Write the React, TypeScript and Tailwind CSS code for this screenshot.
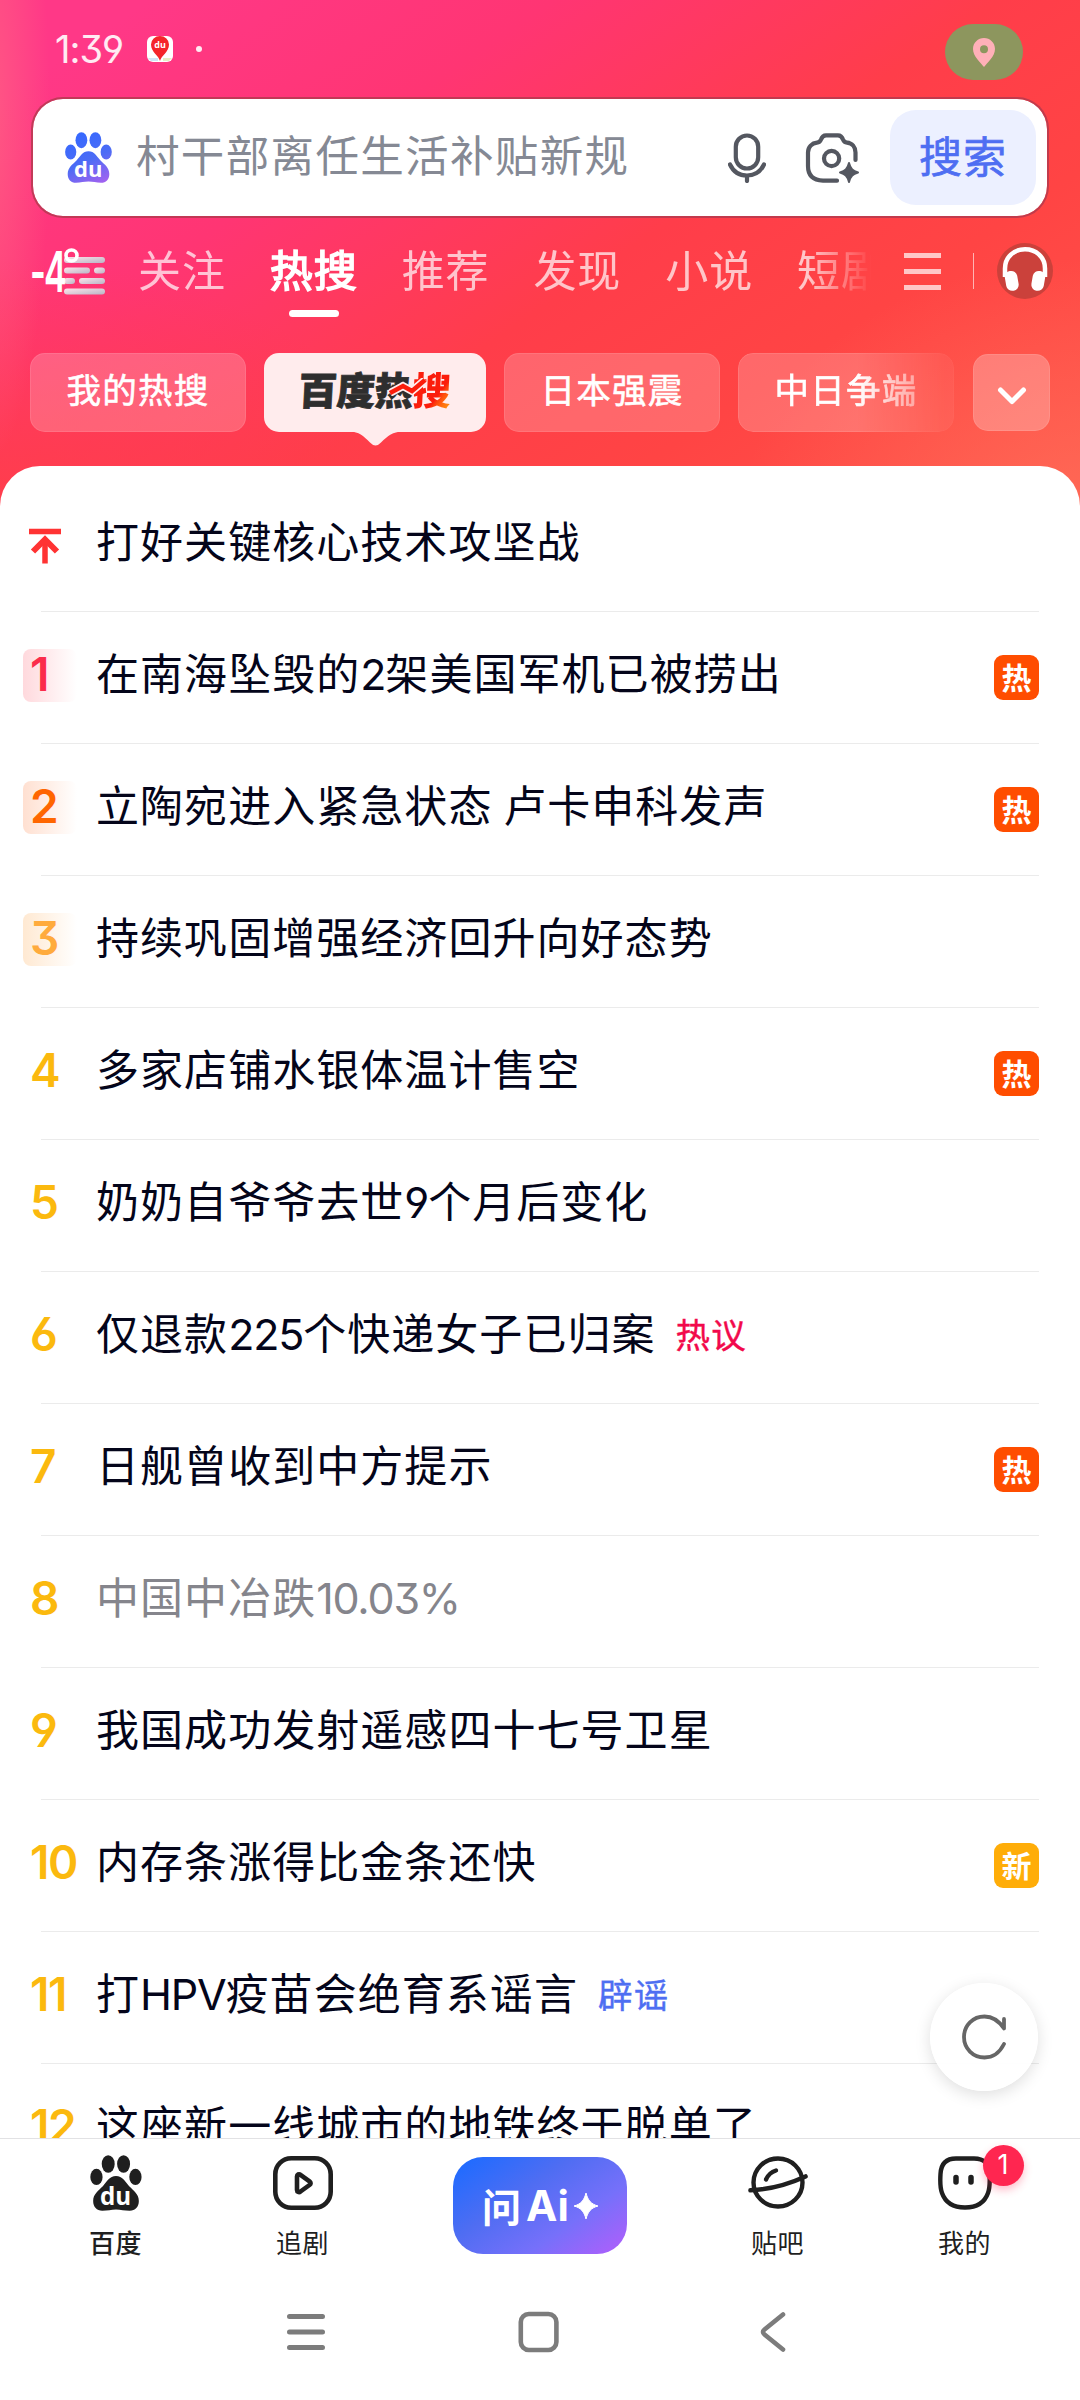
import { ReactNode } from 'react';
import clsx from 'clsx';

interface HotItem {
  rank: string;
  title: string;
  badge?: '热' | '新';
  note?: { text: string; className: string };
  muted?: boolean;
}

const hotList: HotItem[] = [
  { rank: 'top', title: '打好关键核心技术攻坚战' },
  { rank: '1', title: '在南海坠毁的2架美国军机已被捞出', badge: '热' },
  { rank: '2', title: '立陶宛进入紧急状态 卢卡申科发声', badge: '热' },
  { rank: '3', title: '持续巩固增强经济回升向好态势' },
  { rank: '4', title: '多家店铺水银体温计售空', badge: '热' },
  { rank: '5', title: '奶奶自爷爷去世9个月后变化' },
  { rank: '6', title: '仅退款225个快递女子已归案', note: { text: '热议', className: 'text-[#f2094b]' } },
  { rank: '7', title: '日舰曾收到中方提示', badge: '热' },
  { rank: '8', title: '中国中冶跌10.03%', muted: true },
  { rank: '9', title: '我国成功发射遥感四十七号卫星' },
  { rank: '10', title: '内存条涨得比金条还快', badge: '新' },
  { rank: '11', title: '打HPV疫苗会绝育系谣言', note: { text: '辟谣', className: 'text-[#4e6ef2]' } },
  { rank: '12', title: '这座新一线城市的地铁终于脱单了' },
];

const rankColor: Record<string, string> = {
  '1': 'text-[#fb2c4b]',
  '2': 'text-[#ff6600]',
  '3': 'text-[#ffab3d]',
};

const rankPlate: Record<string, string> = {
  '1': 'from-[#ffd9dd]',
  '2': 'from-[#ffe0d1]',
  '3': 'from-[#ffe9d2]',
};

const tabs = ['关注', '热搜', '推荐', '发现', '小说', '短剧'];

function Paw({ className, fill, duClass }: { className: string; fill: string; duClass: string }) {
  return (
    <svg viewBox="0 0 47 51" className={className}>
      <defs>
        <linearGradient id="pawGradient" gradientUnits="userSpaceOnUse" x1="12" y1="0" x2="36" y2="51">
          <stop offset="0" stopColor="#3468ff" />
          <stop offset="0.55" stopColor="#4d6cf5" />
          <stop offset="1" stopColor="#a062f0" />
        </linearGradient>
      </defs>
      <g fill={fill}>
        <ellipse cx="16.4" cy="8.2" rx="5.9" ry="8" />
        <ellipse cx="30.4" cy="8.2" rx="5.9" ry="8" />
        <ellipse cx="5.7" cy="20" rx="5.6" ry="7.4" />
        <ellipse cx="41.2" cy="20" rx="5.6" ry="7.4" />
        <path d="M23.5 19.2C29.5 19.2 31.5 24 35.5 28.5C39.5 32.5 44.3 35.5 44.3 42C44.3 47.5 41 50.8 36 50.8C31 50.8 28 49.6 23.5 49.6C19 49.6 16 50.8 11 50.8C6 50.8 2.7 47.5 2.7 42C2.7 35.5 7.5 32.5 11.5 28.5C15.5 24 17.5 19.2 23.5 19.2Z" />
      </g>
      <text x="23.2" y="45.4" textAnchor="middle" className={duClass}>du</text>
    </svg>
  );
}

function StatusBar() {
  return (
    <div className="flex h-[97px] items-center pl-[55px] pr-[57px]">
      <span className="font-[Inter] text-[38px] leading-none tracking-[-1px] text-white/90 [font-feature-settings:'cv09','cv04']">1:39</span>
      <svg viewBox="0 0 26 26" className="ml-[24px] h-[26px] w-[26px]">
        <rect width="26" height="26" rx="6" fill="#fff" />
        <path d="M1 22h10v3H4z" fill="#cfe6f7" />
        <path d="M16 22h9l-3 3h-6z" fill="#e5efc4" />
        <path d="M13 25C12 20 4 16 4 8.500A9 8.500 0 0 1 22 8.500C22 16 14 20 13 25Z" fill="#f5262b" />
        <text x="13" y="12" textAnchor="middle" fill="#fff" className="font-['Open_Sans'] text-[9px] font-bold">du</text>
      </svg>
      <span className="ml-[23px] h-[6px] w-[6px] rounded-full bg-white/90" />
      <span className="ml-auto mt-[7px] flex h-[56px] w-[78px] items-center justify-center rounded-[28px] bg-[#8d965e]">
        <svg viewBox="0 0 22 29" className="h-[29px] w-[22px]">
          <path fillRule="evenodd" d="M11 0C5 0 0 4.700 0 11C0 18.500 8 25 11 29C14 25 22 18.500 22 11C22 4.700 17 0 11 0ZM11 7.200a4 4 0 1 1 0 8a4 4 0 1 1 0-8Z" fill="#ffb0b8" />
        </svg>
      </span>
    </div>
  );
}

function SearchBar() {
  return (
    <div className="mx-[31px] flex h-[121px] items-center rounded-[32px] border-2 border-[#b23a4e]/80 bg-white bg-clip-padding pl-[32px] pr-[11px]">
      <Paw className="h-[51px] w-[47px]" fill="url(#pawGradient)" duClass="fill-white font-['Open_Sans'] text-[22px] font-bold" />
      <span className="ml-[24px] pb-[8px] text-[43.500px] leading-none tracking-[1.350px] text-[#858994]">村干部离任生活补贴新规</span>
      <svg viewBox="0 0 38 50" className="ml-auto h-[50px] w-[38px]" fill="none" stroke="#545760" strokeWidth="4.200" strokeLinecap="round">
        <rect x="7.800" y="2.500" width="22.400" height="33" rx="11.200" />
        <path d="M2 31.500C5 38 11 42.500 19 42.500S33 38 36 31.500" />
        <path d="M19 43v5" />
      </svg>
      <svg viewBox="0 0 54 50" className="ml-[39px] h-[50px] w-[54px]" fill="none" stroke="#545760" strokeWidth="4.200" strokeLinecap="round" strokeLinejoin="round">
        <path d="M50.500 27V19.500C50.500 14 47 10 42 9.600C39.600 9.400 38.800 8.600 38 6.500C37 3.500 36 2.300 33 2.300H21C18 2.300 17 3.500 16 6.500C15.200 8.600 14.400 9.400 12 9.600C7 10 3 14 3 19.500V33C3 42 8 47.300 18 47.600L32 47.700" />
        <circle cx="26.600" cy="25.500" r="7.600" />
        <path d="M44 30C45.500 36 48 38 53 39.500C48 41 45.500 43 44 49C42.500 43 40 41 35 39.500C40 38 42.500 36 44 30Z" fill="#545760" strokeWidth="2" />
      </svg>
      <button className="ml-[31px] flex h-[95px] w-[146px] items-center justify-center rounded-[26px] bg-[#ecf0ff] pb-[7px] text-[43px] leading-none tracking-[1px] text-[#4e6ef2] [-webkit-text-stroke:0.7px_#4e6ef2]">
        搜索
      </button>
    </div>
  );
}

function ChannelTabs() {
  return (
    <div className="flex h-[106px] items-center pl-[30px] pr-[27px] text-white">
      <svg viewBox="0 0 76 48" className="h-[48px] w-[76px] shrink-0 overflow-visible">
        <defs>
          <linearGradient id="fogGradient" x1="0" y1="0" x2="1" y2="1">
            <stop offset="0" stopColor="#ffe3ea" />
            <stop offset="1" stopColor="#b9b6c6" />
          </linearGradient>
        </defs>
        <g fill="url(#fogGradient)">
          <rect x="34" y="10" width="41" height="6" rx="3" />
          <rect x="34" y="20.500" width="26" height="6" rx="3" />
          <rect x="64" y="20.500" width="11" height="6" rx="3" />
          <rect x="34" y="31" width="11" height="6" rx="3" />
          <rect x="49" y="31" width="26" height="6" rx="3" />
          <rect x="34" y="41.500" width="41" height="6" rx="3" />
        </g>
        <text x="0" y="45" textLength="35" lengthAdjust="spacingAndGlyphs" fill="#fff" className="font-[Inter] text-[57px] font-semibold tracking-[-3px]">-4</text>
        <circle cx="41.500" cy="8.500" r="5.500" fill="none" stroke="#fff" strokeWidth="3.600" />
      </svg>
      <div className="ml-[32px] flex w-[736px] gap-[44px] overflow-hidden whitespace-nowrap [mask-image:linear-gradient(to_right,black_670px,transparent_734px)]">
        {tabs.map((tab) => {
          const active = tab === '热搜';
          return (
            <span
              key={tab}
              className={clsx(
                'flex h-[94px] shrink-0 flex-col items-center pt-[19px] text-[43px] leading-[50px] tracking-[0.900px]',
                active ? '[-webkit-text-stroke:1.6px_white]' : 'text-white/70',
              )}
            >
              {tab}
              {active && <i className="mt-[17px] h-[7px] w-[50px] rounded-full bg-white" />}
            </span>
          );
        })}
      </div>
      <div className="ml-[30px] flex h-[37px] w-[37px] flex-col justify-between">
        <i className="h-[5px] bg-white/70" />
        <i className="h-[5px] bg-white/70" />
        <i className="h-[5px] bg-white/70" />
      </div>
      <i className="ml-[32px] h-[36px] w-px bg-white/60" />
      <svg viewBox="0 0 56 56" className="ml-auto h-[56px] w-[56px]">
        <circle cx="28" cy="28" r="28" fill="#cb413b" />
        <path d="M8 34V25.500C8 14 17 6.200 28 6.200S48 14 48 25.500V34" fill="none" stroke="#fff" strokeWidth="4.500" />
        <rect x="8.500" y="28" width="12.500" height="20" rx="6" transform="rotate(-10 14 38)" fill="#fff" />
        <rect x="35" y="28" width="12.500" height="20" rx="6" transform="rotate(10 42 38)" fill="#fff" />
      </svg>
    </div>
  );
}

function Chip({ children, className }: { children: ReactNode; className?: string }) {
  return (
    <span className={clsx('flex h-[79px] w-[216px] shrink-0 items-center justify-center rounded-[15px] border border-white/10 bg-white/20 pb-[9px] text-[34.500px] leading-none tracking-[1.200px] text-white [-webkit-text-stroke:0.6px_white]', className)}>
      {children}
    </span>
  );
}

function TopicChips() {
  return (
    <div className="flex h-[143px] items-start gap-[18px] pt-[29px] pl-[30px]">
      <Chip>我的热搜</Chip>
      <div className="relative flex h-[79px] w-[222px] shrink-0 items-center justify-center rounded-[15px] bg-[#ffeced] pb-[10px]">
        <span className="-skew-x-3 text-[38.500px] leading-[48px] font-black tracking-[-0.600px] text-[#2e2e2e]">
          <span className="[-webkit-text-stroke:0.8px_#2e2e2e]">百度热</span>
          <span className="bg-linear-to-br from-[#fb1d0c] from-65% to-[#ffae10] bg-clip-text text-transparent">搜</span>
        </span>
        <svg viewBox="0 0 38 18" className="absolute top-[25px] left-[125px] h-[18px] w-[38px]" fill="none">
          <path d="M1 15L14 8L23 13L36 2" stroke="#ffeced" strokeWidth="8" />
          <path d="M1 15L14 8L23 13L36 2" stroke="#fb1d0c" strokeWidth="4.500" />
        </svg>
        <svg viewBox="0 0 52 15" className="absolute top-[78px] left-[86px] h-[15px] w-[52px]">
          <path d="M0 0.500C9 1 13 4.500 20 11.500Q25.500 17.500 31 11.500C38 4.500 43 1 52 0.500Z" fill="#ffeced" />
        </svg>
      </div>
      <Chip>日本强震</Chip>
      <Chip className="[mask-image:linear-gradient(to_right,black_55%,rgba(0,0,0,0.25)_96%)]">中日争端</Chip>
      <span className="mt-px ml-px flex h-[77px] w-[77px] items-center justify-center rounded-[15px] border border-white/10 bg-white/25">
        <svg viewBox="0 0 30 18" className="mt-[6px] h-[18px] w-[30px]" fill="none" stroke="#fff" strokeWidth="5" strokeLinecap="round" strokeLinejoin="round">
          <path d="M3.500 3L15 14.500L26.500 3" />
        </svg>
      </span>
    </div>
  );
}

// Latin letters and digits get their own face and tighter tracking inside Chinese titles
function Title({ text }: { text: string }) {
  return (
    <>
      {text.split(/([A-Z0-9.%]+)/).map((part, idx) =>
        idx % 2 ? (
          <span key={idx} className="font-[Inter] text-[43px] leading-none font-normal tracking-[-1.200px] [font-feature-settings:'cv03','cv04','cv09']">{part}</span>
        ) : (
          part
        ),
      )}
    </>
  );
}

function HotRow({ item, first }: { item: HotItem; first: boolean }) {
  return (
    <div className={clsx('relative flex shrink-0 items-center pr-[41px]', first ? 'h-[146px] pt-[14px]' : 'h-[132px]')}>
      <div className="flex w-[96px] shrink-0 pl-[23px]">
        {item.rank === 'top' ? (
          <svg viewBox="0 0 32 36" className="ml-[6px] h-[36px] w-[32px]" fill="none" stroke="#ff3333" strokeWidth="5.500">
            <path d="M0 3.500H32M16 35.500V11" />
            <path d="M4 23.500L16 11.500L28 23.500" strokeWidth="6" />
          </svg>
        ) : (
          <span
            className={clsx(
              'mt-[-5px] flex h-[53px] w-[54px] items-center rounded-[8px] pb-[3px] pl-[7px] font-[Inter] text-[46px] leading-none font-semibold tracking-[-1.500px] [font-feature-settings:\'cv03\',\'cv04\',\'cv09\']',
              rankColor[item.rank] ?? 'text-[#fbb90e]',
              rankPlate[item.rank] && 'bg-linear-to-r to-white',
              rankPlate[item.rank],
            )}
          >
            {item.rank}
          </span>
        )}
      </div>
      <span className={clsx('mt-[-15px] text-[43px] leading-[60px] tracking-[1.050px] whitespace-nowrap', item.muted ? 'text-[#85858c]' : 'text-[#04051a]')}>
        <Title text={item.title} />
      </span>
      {item.note && <span className={clsx('mt-[-10px] ml-[20px] text-[34.500px] leading-none tracking-[1.200px] [-webkit-text-stroke:0.4px_currentColor]', item.note.className)}>{item.note.text}</span>}
      {item.badge && (
        <span className={clsx('mt-[-2px] ml-auto flex h-[45px] w-[45px] items-center justify-center rounded-[9px] pb-[3px] text-[30px] leading-none font-bold text-white', item.badge === '热' ? 'bg-[#ff4d00]' : 'bg-[#ffad08]')}>
          {item.badge}
        </span>
      )}
      <i className="absolute right-[41px] bottom-0 left-[41px] h-px bg-[#ebebeb]" />
    </div>
  );
}

function NavItem({ label, bold, children }: { label: string; bold?: boolean; children: ReactNode }) {
  return (
    <div className="flex w-[187px] flex-col items-center">
      <div className="relative flex h-[56px] items-center">{children}</div>
      <span className={clsx('mt-[16px] text-[26px] leading-[30px] tracking-[0.500px] text-[#1f1f1f]', bold && 'font-medium')}>{label}</span>
    </div>
  );
}

function BottomNav() {
  return (
    <nav className="flex h-[142px] shrink-0 border-t border-[#e2e2e4] bg-white px-[22px] pt-[16px]">
      <NavItem label="百度" bold>
        <Paw className="h-[56px] w-[52px]" fill="#1f1f1f" duClass="fill-white font-['Open_Sans'] text-[22px] font-bold" />
      </NavItem>
      <NavItem label="追剧">
        <svg viewBox="0 0 60 54" className="h-[54px] w-[60px]" fill="none" stroke="#1f1f1f" strokeWidth="4.600" strokeLinejoin="round">
          <rect x="2.300" y="2.300" width="55.400" height="49.400" rx="16" />
          <path d="M24 20.500V34C24 36 26 36.800 27.500 35.500L36.500 29C38 27.800 38 26.500 36.500 25.300L27.500 18.800C26 17.600 24 18.500 24 20.500Z" />
        </svg>
      </NavItem>
      <div className="flex w-[288px] justify-center pt-[2px]">
        <button className="flex h-[97px] w-[174px] items-center justify-center rounded-[30px] bg-[linear-gradient(145deg,#1f6bff_5%,#4f6df2_38%,#7670fa_68%,#a462fb_92%)] text-white">
          <span className="text-[39px] leading-none font-bold">问</span>
          <span className="ml-[5px] font-[Inter] text-[42px] leading-none font-bold">Ai</span>
          <svg viewBox="0 0 24 26" className="ml-[5px] h-[26px] w-[24px]">
            <path d="M12 0C14 7.500 17 11 24 13C17 15 14 18.500 12 26C10 18.500 7 15 0 13C7 11 10 7.500 12 0Z" fill="#fff" stroke="#fff" strokeWidth="1" strokeLinejoin="round" />
          </svg>
        </button>
      </div>
      <NavItem label="贴吧">
        <svg viewBox="0 0 60 54" className="h-[54px] w-[60px]" fill="none" stroke="#1f1f1f" strokeWidth="4.400" strokeLinecap="round">
          <ellipse cx="30" cy="26.500" rx="24.500" ry="24" />
          <path d="M2.500 34.300C21 33.500 40 28.500 57.500 20.500" strokeWidth="4.600" />
          <path d="M18 23.500C20 19 23 16 28 14.500" />
        </svg>
      </NavItem>
      <NavItem label="我的">
        <svg viewBox="0 0 54 54" className="h-[54px] w-[54px]" fill="none" stroke="#1f1f1f" strokeWidth="4.400" strokeLinecap="round">
          <path d="M18 2.500H36C46 2.500 51.500 8 51.500 18C52 26 51.500 33 50 37C46.500 47 39 51.500 27 51.500S7.500 47 4 37C2.500 33 2 26 2.500 18C3 8 8 2.500 18 2.500Z" />
          <path d="M18 21.500V26M33 21.500V26" strokeWidth="5.500" />
        </svg>
        <span className="absolute top-[-10px] left-[45px] flex h-[41px] w-[41px] items-center justify-center rounded-full bg-[#ff2650] pb-[2px] font-[Inter] text-[27px] leading-none text-white shadow-[0_4px_8px_rgba(255,38,80,0.3)]">
          1
        </span>
      </NavItem>
    </nav>
  );
}

function SystemNav() {
  return (
    <div className="flex h-[120px] shrink-0 bg-white pt-[31px] pl-[287px]">
      <svg viewBox="0 0 38 42" className="h-[42px] w-[38px]" stroke="#7c7c7c" strokeWidth="5" strokeLinecap="round">
        <path d="M2.500 5.500H35.500M2.500 21H35.500M2.500 36.500H35.500" />
      </svg>
      <svg viewBox="0 0 41 42" className="ml-[193px] h-[42px] w-[41px]" fill="none" stroke="#7c7c7c" strokeWidth="4.600">
        <rect x="2.800" y="3" width="35.600" height="36" rx="8" />
      </svg>
      <svg viewBox="0 0 26 42" className="ml-[201px] h-[42px] w-[26px]" fill="none" stroke="#7c7c7c" strokeWidth="4.600" strokeLinecap="round">
        <path d="M23 3.500L4.500 18.500Q1.500 21 4.500 23.500L23 38.500" />
      </svg>
    </div>
  );
}

export default function App() {
  return (
    <div className="relative flex h-[2400px] w-[1080px] flex-col overflow-hidden bg-white font-['Noto_Sans_CJK_SC',sans-serif]">
      <header className="h-[520px] shrink-0 bg-[radial-gradient(ellipse_60px_340px_at_-10px_120px,rgba(255,110,130,0.6),transparent),radial-gradient(ellipse_340px_260px_at_1080px_520px,rgba(255,125,100,0.5),transparent),radial-gradient(ellipse_420px_260px_at_0px_520px,rgba(255,62,72,0.9),transparent),linear-gradient(146deg,#ff3887_8%,#ff3573_30%,#ff3d4a_54%,#ff4444_72%,#ff5448_96%)]">
        <StatusBar />
        <SearchBar />
        <ChannelTabs />
        <TopicChips />
      </header>
      <main className="relative -mt-[54px] flex h-[1672px] shrink-0 flex-col overflow-hidden rounded-t-[40px] bg-white">
        {hotList.map((item, idx) => (
          <HotRow key={item.rank} item={item} first={idx === 0} />
        ))}
      </main>
      <BottomNav />
      <SystemNav />

      {/* Floating refresh button */}
      <button className="absolute top-[1983px] left-[930px] flex h-[108px] w-[108px] items-center justify-center rounded-full bg-white/95 shadow-[0_4px_16px_rgba(0,0,0,0.13)]">
        <svg viewBox="0 0 46 46" className="h-[46px] w-[46px]" fill="none" stroke="#666" strokeWidth="3.800" strokeLinecap="round" strokeLinejoin="round">
          <path d="M43 30C39 38 32 43.500 23.500 43.500C12 43.500 3 34.500 3 23S12 2.500 23.500 2.500C31 2.500 38 7 43 14.500V5" />
        </svg>
      </button>
    </div>
  );
}
